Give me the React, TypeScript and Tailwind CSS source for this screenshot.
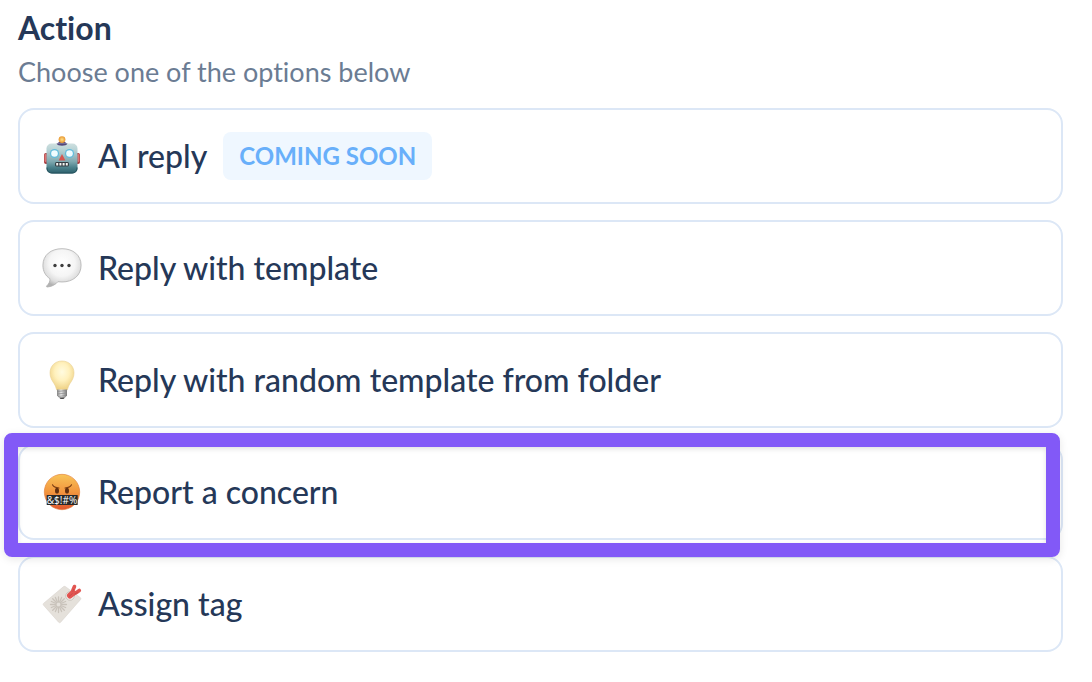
import type { ReactNode } from "react";

interface ActionOption {
  label: string;
  icon: ReactNode;
  badge?: string;
  highlighted?: boolean;
}

function RobotIcon() {
  return (
    <svg viewBox="0 0 40 40" className="size-10" aria-hidden>
      <defs>
        <linearGradient id="robot-face" x1="0" y1="0" x2="0" y2="1">
          <stop offset="0" stopColor="#cfe0e0" />
          <stop offset="0.25" stopColor="#b3d0d3" />
          <stop offset="0.6" stopColor="#7fa9b0" />
          <stop offset="0.8" stopColor="#4b818b" />
          <stop offset="1" stopColor="#2b5f6b" />
        </linearGradient>
        <radialGradient id="robot-bulb">
          <stop offset="0" stopColor="#ffe08a" />
          <stop offset="1" stopColor="#e8962e" />
        </radialGradient>
      </defs>
      <rect x="2" y="17" width="5" height="11" rx="2" fill="#a83a3e" />
      <rect x="33" y="17" width="5" height="11" rx="2" fill="#a83a3e" />
      <rect x="2.5" y="18" width="2" height="8" rx="1" fill="#d97774" />
      <rect x="35.5" y="18" width="2" height="8" rx="1" fill="#d97774" />
      <path d="M15 9.5c0-3 2-4 5-4s5 1 5 4z" fill="#5c4a83" />
      <circle cx="20" cy="3.6" r="3.4" fill="url(#robot-bulb)" />
      <rect x="4.5" y="7.5" width="31" height="30" rx="5" fill="url(#robot-face)" />
      <path d="M5 31.5c0 4 2 5.5 6 5.5h18c4 0 6-1.5 6-5.5" fill="none" stroke="#27535e" />
      <path d="M14.5 7.5h11c-1 3-10 3-11 0z" fill="#54487a" />
      <circle cx="12.5" cy="17.5" r="4.6" fill="#62bcdc" />
      <circle cx="27.5" cy="17.5" r="4.6" fill="#62bcdc" />
      <circle cx="12.5" cy="17.5" r="3.3" fill="#effcff" />
      <circle cx="27.5" cy="17.5" r="3.3" fill="#effcff" />
      <path d="M20 18l3.4 6.5h-6.8z" fill="#d65650" />
      <rect x="13" y="26" width="14" height="4.5" rx="1.5" fill="#343f45" />
      <path d="M14.2 27h2v2.6h-2zM17.4 27h2v2.6h-2zM20.6 27h2v2.6h-2zM23.8 27h2v2.6h-2z" fill="#f4f5f2" />
    </svg>
  );
}

function SpeechIcon() {
  return (
    <svg viewBox="0 0 40 40" className="size-10" aria-hidden>
      <defs>
        <radialGradient id="speech" cx="0.5" cy="0.38" r="0.62">
          <stop offset="0" stopColor="#ffffff" />
          <stop offset="0.55" stopColor="#f5f5f5" />
          <stop offset="0.82" stopColor="#dddddd" />
          <stop offset="1" stopColor="#b2b2b2" />
        </radialGradient>
      </defs>
      <path
        d="M20 .7C9 .7.9 7 .9 17.3c0 6 2.6 10.5 7 13.4.4 3-1.2 5.3-3.2 7.2-.6.7 0 1.2.8 1.1 4.5-.4 8.2-2.6 10.4-5.3 1.3.2 2.7.3 4.1.3 11 0 19.1-6.5 19.1-16.7S31 .7 20 .7z"
        fill="url(#speech)"
        stroke="#b0b0b0"
        strokeWidth="0.8"
      />
      <g fill="#3d3d3d">
        <circle cx="13" cy="17.5" r="1.7" />
        <circle cx="20" cy="17.5" r="1.7" />
        <circle cx="27" cy="17.5" r="1.7" />
      </g>
    </svg>
  );
}

function BulbIcon() {
  return (
    <svg viewBox="0 0 40 40" className="size-10" aria-hidden>
      <defs>
        <radialGradient id="bulb-glass" cx="0.5" cy="0.38" r="0.6">
          <stop offset="0" stopColor="#fffbe0" />
          <stop offset="0.5" stopColor="#fff1bd" />
          <stop offset="1" stopColor="#efd286" />
        </radialGradient>
        <linearGradient id="bulb-base" x1="0" x2="1">
          <stop offset="0" stopColor="#858585" />
          <stop offset="0.4" stopColor="#e8e8e8" />
          <stop offset="1" stopColor="#777777" />
        </linearGradient>
      </defs>
      <path
        d="M20 1C13 1 8 6 8 13c0 4.5 2 7.5 4 10.500 1.500 2.200 2 4.500 2.700 6.500h10.600c.7-2 1.200-4.300 2.700-6.500 2-3 4-6 4-10.500C32 6 27 1 20 1z"
        fill="url(#bulb-glass)"
        stroke="#e9d092"
        strokeWidth="0.6"
      />
      <path d="M15 29.5h10v6l-3 3.200h-4l-3-3.200z" fill="url(#bulb-base)" />
      <path d="M15 31.5l10-1M15 34l10-1M16 36.500l8-1" stroke="#8a8a8a" strokeWidth="0.7" />
      <path d="M17.5 37.5h5l-1 1.500h-3z" fill="#4b4b4b" />
    </svg>
  );
}

function CursingIcon() {
  return (
    <svg viewBox="0 0 40 40" className="size-10" aria-hidden>
      <defs>
        <linearGradient id="cursing-face" x1="0" y1="0" x2="0" y2="1">
          <stop offset="0" stopColor="#f8c458" />
          <stop offset="0.5" stopColor="#f3953e" />
          <stop offset="1" stopColor="#e0562d" />
        </linearGradient>
      </defs>
      <circle cx="20" cy="20" r="17.7" fill="url(#cursing-face)" stroke="#e37b34" strokeWidth="0.6" />
      <ellipse cx="15" cy="18.7" rx="2" ry="2.9" fill="#64300f" />
      <ellipse cx="25" cy="18.7" rx="2" ry="2.9" fill="#64300f" />
      <path
        d="M10.5 12.8c1 2 3 3 6.500 3.200M29.5 12.8c-1 2-3 3-6.500 3.200"
        fill="none"
        stroke="#7a3d13"
        strokeWidth="1.1"
        strokeLinecap="round"
      />
      <rect x="4.700" y="23" width="31" height="10" rx="0.6" fill="#292929" />
      <text
        x="20"
        y="31.5"
        textAnchor="middle"
        fontSize="10"
        fontWeight="500"
        fill="#ffffff"
        className="font-['Open_Sans',sans-serif]"
      >
        {"&$!#%"}
      </text>
    </svg>
  );
}

function TagIcon() {
  return (
    <svg viewBox="0 0 40 40" className="size-10" aria-hidden>
      <path
        d="M1.7 19.200L21.300 2.800c.6-.5 1.200-.6 2-.3L38.300 13.500c.8.6.8 1.300.3 2L18.700 38.200c-.7.7-1.500.7-2.100 0L1.500 21.200c-.6-.7-.5-1.400.2-2z"
        fill="#e5e1db"
        stroke="#d6d1ca"
        strokeWidth="0.5"
      />
      <g stroke="#c9c3bb" strokeWidth="1.300" strokeLinecap="round">
        <path d="M16.500 18v-5M16.500 23v5.500M14 20.500H8.500M19 20.500h5.500" />
        <path d="M14.700 18.700l-4-4M18.300 18.700l4-4M14.700 22.300l-4 4M18.300 22.300l4 4" />
        <path d="M15.500 18.200l-2.100-4.800M17.500 18.200l2.100-4.800M15.500 22.800l-2.100 4.800M17.500 22.800l2.100 4.800" />
        <path d="M14.200 19.500l-4.800-2M18.800 19.500l4.800-2M14.200 21.500l-4.800 2M18.800 21.500l4.800 2" />
      </g>
      <circle cx="28" cy="12" r="4.200" fill="#f7f5f2" stroke="#bdb7af" strokeWidth="0.8" />
      <g fill="none" stroke="#e25551" strokeLinecap="round" strokeLinejoin="round">
        <path d="M30 9l1-3 1.500-3.500" strokeWidth="3.600" />
        <path d="M31 10l3.500-1.500L37.300 6.500" strokeWidth="3.600" />
        <path d="M28 11.500l3-2.500" strokeWidth="6" />
      </g>
      <path d="M27 12.500l3.500-3M30.800 7.500l1-2.500M32.500 10l3-1.500" stroke="#c24442" strokeWidth="0.7" />
    </svg>
  );
}

const OPTIONS: ActionOption[] = [
  { label: "AI reply", icon: <RobotIcon />, badge: "COMING SOON" },
  { label: "Reply with template", icon: <SpeechIcon /> },
  { label: "Reply with random template from folder", icon: <BulbIcon /> },
  { label: "Report a concern", icon: <CursingIcon />, highlighted: true },
  { label: "Assign tag", icon: <TagIcon /> },
];

function OptionCard({ label, icon, badge, highlighted }: ActionOption) {
  return (
    <li className="relative">
      <button
        type="button"
        className="flex h-24 w-full items-center rounded-2xl border-2 border-[#dce7f6] bg-white px-[22px] text-left text-[32px] leading-10 font-medium text-[#253858]"
      >
        <span className="mr-4 shrink-0">{icon}</span>
        <span>{label}</span>
        {badge && (
          <span className="ml-4 rounded-lg bg-[#eff7ff] px-4 text-2xl leading-[48px] font-bold text-[#68affa]">
            {badge}
          </span>
        )}
      </button>
      {/* Callout frame around the card */}
      {highlighted && (
        <div
          className="pointer-events-none absolute -top-[11px] right-[3px] -bottom-[17px] -left-[14px] z-10 rounded-lg border-14 border-[#8259f7] shadow-[0_2px_8px_rgba(0,0,0,0.1),inset_0_2px_5px_rgba(0,0,0,0.12)]"
          aria-hidden
        />
      )}
    </li>
  );
}

export default function App() {
  return (
    <main className="min-h-screen bg-white pt-2 pr-[29px] pb-8 pl-[18px] font-[Lato,sans-serif] [font-variant-ligatures:none]">
      <h1 className="text-[32px] leading-10 font-bold text-[#253858]">Action</h1>
      <p className="mt-1 text-[27px] leading-10 text-[#6b7c93]">Choose one of the options below</p>
      <ul className="mt-4 flex flex-col gap-4">
        {OPTIONS.map((option) => (
          <OptionCard key={option.label} {...option} />
        ))}
      </ul>
    </main>
  );
}
